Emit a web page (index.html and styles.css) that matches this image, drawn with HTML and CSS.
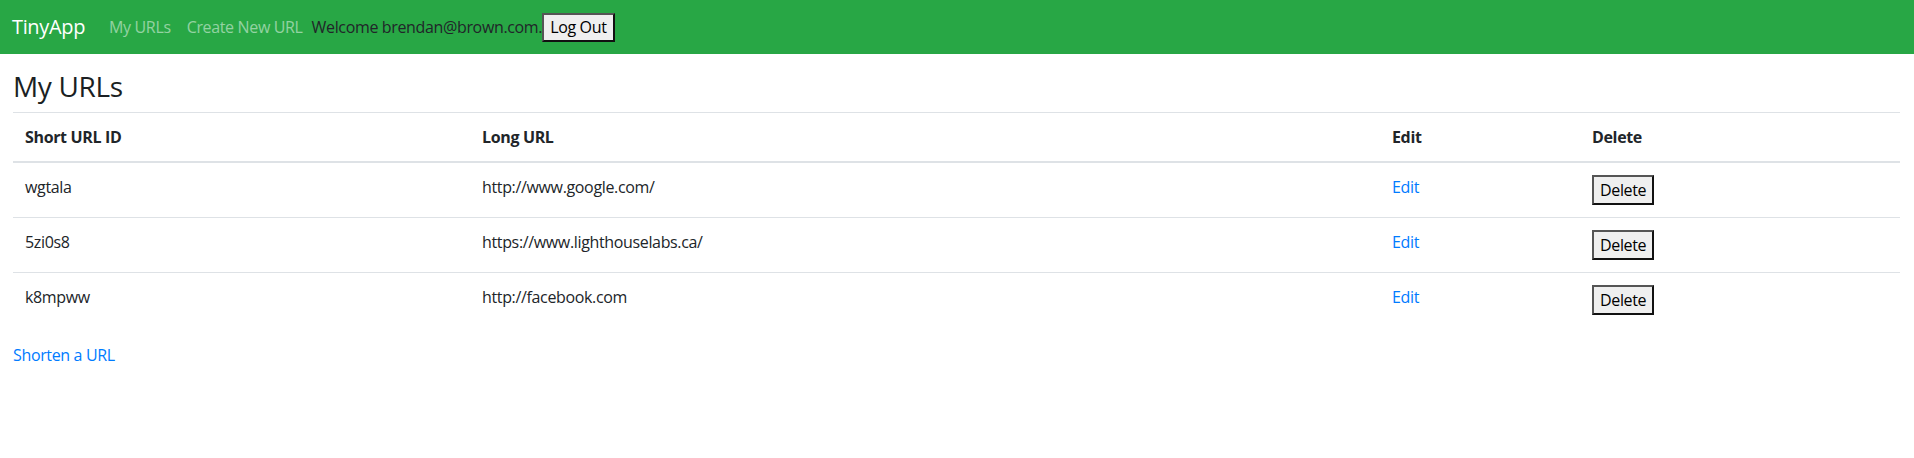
FILE: index.html
```html
<!DOCTYPE html>
<html lang="en">
<head>
<meta charset="utf-8">
<title>TinyApp</title>
<link rel="stylesheet" href="styles.css">
</head>
<body>
<nav class="navbar">
  <a class="brand" href="#">TinyApp</a>
  <a class="nav-link" href="#">My URLs</a>
  <a class="nav-link" href="#">Create New URL</a>
  <span class="welcome">Welcome brendan@brown.com.</span><button class="btn">Log Out</button>
</nav>
<main class="container">
  <h3 class="title">My URLs</h3>
  <table class="table">
    <thead>
      <tr>
        <th class="c-id">Short URL ID</th>
        <th class="c-long">Long URL</th>
        <th class="c-edit">Edit</th>
        <th class="c-del">Delete</th>
      </tr>
    </thead>
    <tbody>
      <tr>
        <td>wgtala</td>
        <td>http://www.google.com/</td>
        <td><a href="#">Edit</a></td>
        <td><button class="btn">Delete</button></td>
      </tr>
      <tr>
        <td>5zi0s8</td>
        <td>https://www.lighthouselabs.ca/</td>
        <td><a href="#">Edit</a></td>
        <td><button class="btn">Delete</button></td>
      </tr>
      <tr>
        <td>k8mpww</td>
        <td>http://facebook.com</td>
        <td><a href="#">Edit</a></td>
        <td><button class="btn">Delete</button></td>
      </tr>
    </tbody>
  </table>
  <a class="shorten" href="#">Shorten a URL</a>
</main>
</body>
</html>
```

FILE: styles.css
```css
* { box-sizing: border-box; }
body {
  margin: 0;
  font-family: "Open Sans", "Noto Sans", sans-serif;
  font-size: 16px;
  line-height: 1.5;
  letter-spacing: -0.35px;
  color: #212529;
  background: #fff;
}
a { color: #007bff; text-decoration: none; }
.navbar {
  display: flex;
  align-items: center;
  height: 54px;
  padding: 0 12px;
  background: #28a745;
}
.brand {
  color: #fff;
  font-size: 20px;
  margin-right: 16px;
}
.nav-link {
  color: rgba(255, 255, 255, 0.5);
  padding: 0 8px;
}
.welcome { padding-left: 1px; color: #212529; }
.btn {
  font-family: inherit;
  font-size: 16px;
  letter-spacing: -0.35px;
  line-height: 22px;
  height: 29px;
  padding: 0 6px;
  color: #000;
  background: #efefef;
  border: 2px solid;
  border-color: #555 #111 #111 #555;
  border-radius: 0;
}
.container {
  padding: 16px 14px 0 13px;
}
.title {
  margin: 0 0 8px;
  font-size: 28px;
  font-weight: 500;
  line-height: 1.2;
  color: #1b1f23;
}
.table {
  width: 100%;
  border-collapse: collapse;
  margin-bottom: 16px;
}
.table th, .table td {
  padding: 12px;
  text-align: left;
  vertical-align: top;
  border-top: 1px solid #dee2e6;
}
.table th {
  vertical-align: bottom;
  border-bottom: 2px solid #dee2e6;
  font-weight: 700;
}
.c-id { width: 457px; }
.c-long { width: 910px; }
.c-edit { width: 200px; }
.table td .btn { height: 30px; }
.shorten { display: inline-block; }
```
